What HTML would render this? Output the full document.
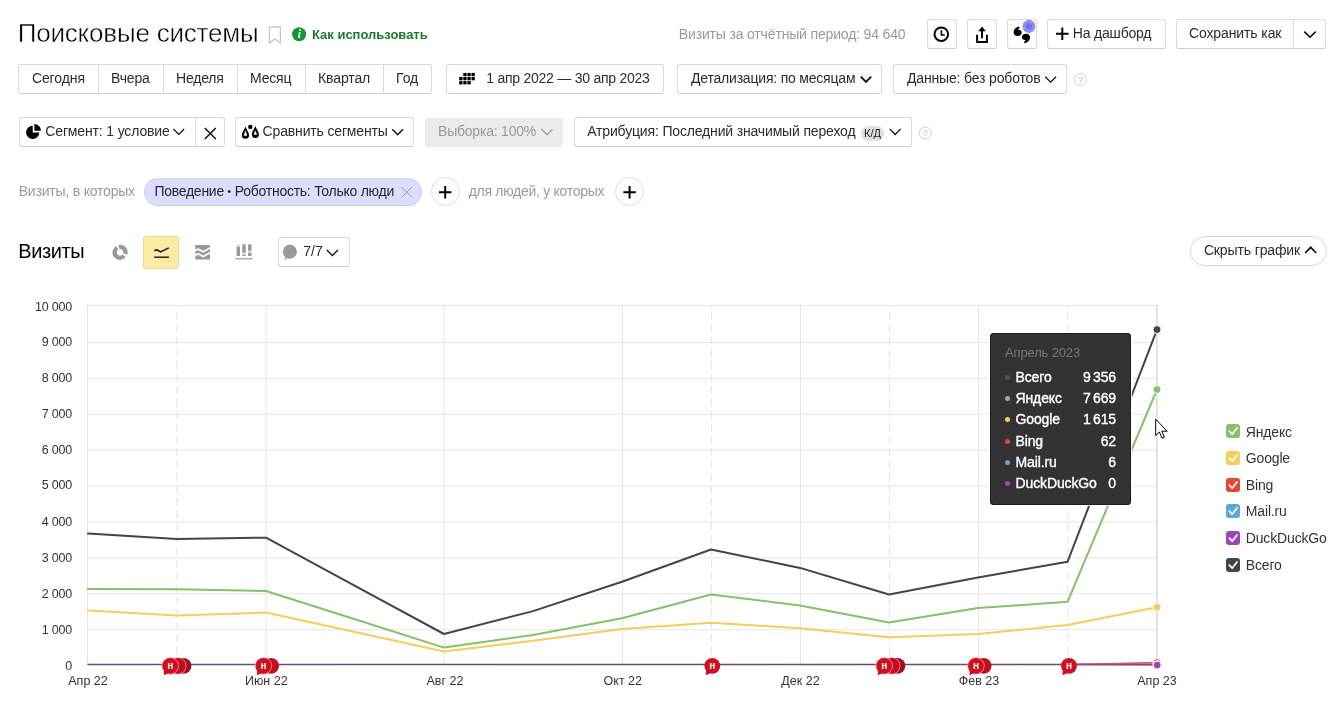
<!DOCTYPE html>
<html lang="ru">
<head>
<meta charset="utf-8">
<title>Поисковые системы</title>
<style>
*{box-sizing:border-box;margin:0;padding:0}
html,body{width:1340px;height:716px;overflow:hidden;background:#fff}
body{font-family:"Liberation Sans",sans-serif;font-size:13.5px;color:#000;position:relative;will-change:transform}
.a{position:absolute;white-space:nowrap}
.btn{position:absolute;height:30px;border:1px solid #d9d9d9;border-bottom-color:#cfcfcf;border-radius:3px;background:#fff}
.t{position:absolute;white-space:nowrap;font-size:14px;line-height:16px;color:#2b2b2b;top:5px}
.g{position:absolute;white-space:nowrap;font-size:14px;line-height:18px;color:#999;letter-spacing:-.25px}
.sep{position:absolute;top:0;bottom:0;width:1px;background:#d9d9d9}
.yl{position:absolute;white-space:nowrap;font-size:12.5px;line-height:14px;color:#333;width:60px;left:12px;text-align:right;letter-spacing:-.2px}
.xl{position:absolute;white-space:nowrap;font-size:12.5px;line-height:14px;color:#333;width:80px;text-align:center;top:674.4px}
.lg{position:absolute;white-space:nowrap;font-size:14px;line-height:16px;color:#333;left:1245.8px;letter-spacing:-.16px}
.cb{position:absolute;left:1226px;width:14px;height:14px;border-radius:3px}
.tt{position:absolute;left:989.5px;top:333.2px;width:141.6px;height:172px;background:#333;border-radius:4px;box-shadow:inset 0 0 0 1px #1e1e1e,0 0 0 1px rgba(255,255,255,.85)}
.tr{position:absolute;left:26px;right:15.1px;height:18px;font-size:14px;line-height:18px;font-weight:400;color:#fff;white-space:nowrap;letter-spacing:-.12px;-webkit-text-stroke:.35px #fff}
.tr b{position:absolute;right:0;top:0;font-weight:400;word-spacing:-1.5px}
.tr i{position:absolute;left:-11px;top:7px;width:5px;height:5px;border-radius:50%}
svg{position:absolute;overflow:visible}
</style>
</head>
<body>

<!-- ===== header row ===== -->
<div class="a" id="title" style="left:17.7px;top:17px;font-size:26px;line-height:32px;letter-spacing:-0.20px;color:#000;-webkit-text-stroke:.45px #fff">Поисковые системы</div>
<div class="a" id="howto" style="left:312.0px;top:27px;font-size:13px;line-height:16px;font-weight:700;color:#1d7a2b;letter-spacing:-0.01px">Как использовать</div>
<div class="g" id="period" style="left:678.8px;top:25px;letter-spacing:-0.16px">Визиты за отчётный период: 94 640</div>

<div class="btn" style="left:927px;top:19px;width:30px"></div>
<div class="btn" style="left:967px;top:19px;width:30px"></div>
<div class="btn" style="left:1007px;top:19px;width:30px"></div>
<div class="btn" style="left:1047px;top:19px;width:119px"><span class="t" id="dash" style="left:24.8px;letter-spacing:-0.19px">На дашборд</span></div>
<div class="btn" style="left:1176px;top:19px;width:150px"><span class="t" id="save" style="left:11.9px;letter-spacing:-0.10px">Сохранить как</span><span class="sep" style="left:116px"></span></div>

<!-- ===== period row ===== -->
<div class="btn" style="left:18px;top:64px;width:414px">
 <span class="t" id="p1" style="left:12.9px;letter-spacing:-0.09px">Сегодня</span><span class="sep" style="left:79px"></span>
 <span class="t" id="p2" style="left:92.0px;letter-spacing:-0.16px">Вчера</span><span class="sep" style="left:144px"></span>
 <span class="t" id="p3" style="left:157.0px;letter-spacing:-0.21px">Неделя</span><span class="sep" style="left:218px"></span>
 <span class="t" id="p4" style="left:231.0px;letter-spacing:-0.18px">Месяц</span><span class="sep" style="left:286px"></span>
 <span class="t" id="p5" style="left:299.0px;letter-spacing:-0.11px">Квартал</span><span class="sep" style="left:364px"></span>
 <span class="t" id="p6" style="left:377.0px;letter-spacing:0.00px">Год</span>
</div>
<div class="btn" style="left:446px;top:64px;width:218px"><span class="t" id="date" style="left:39.3px;letter-spacing:-0.25px">1 апр 2022 — 30 апр 2023</span></div>
<div class="btn" style="left:677px;top:64px;width:205px"><span class="t" id="det" style="left:13.0px;letter-spacing:-0.20px">Детализация: по месяцам</span></div>
<div class="btn" style="left:893px;top:64px;width:174px"><span class="t" id="dat" style="left:13.0px;letter-spacing:-0.16px">Данные: без роботов</span></div>

<!-- ===== segment row ===== -->
<div class="btn" style="left:19px;top:117px;width:206px"><span class="t" id="seg" style="left:25.3px;letter-spacing:-0.15px">Сегмент: 1 условие</span><span class="sep" style="left:175px"></span></div>
<div class="btn" style="left:235px;top:117px;width:179px"><span class="t" id="cmp" style="left:26.6px;letter-spacing:-0.16px">Сравнить сегменты</span></div>
<div class="btn" style="left:425px;top:118px;width:138px;height:29px;background:#ebebeb;border-color:#ebebeb"><span class="t" id="smp" style="left:12.0px;top:4px;color:#999;letter-spacing:-0.21px">Выборка: 100%</span></div>
<div class="btn" style="left:574px;top:117px;width:338px"><span class="t" id="atr" style="left:12.2px;letter-spacing:-0.16px">Атрибуция: Последний значимый переход</span>
 <span class="a" style="left:286px;top:8px;width:23px;height:15px;border-radius:8px;background:#e0e0e0"></span>
 <span class="a" id="kd" style="left:289px;top:8.5px;font-size:11px;line-height:13px;color:#222">К/Д</span></div>

<!-- ===== filter row ===== -->
<div class="g" id="f1" style="left:18.7px;top:182px;letter-spacing:-0.20px">Визиты, в которых</div>
<div class="a" style="left:144px;top:178px;width:278px;height:28px;border-radius:14px;background:#dcdcfb;border:1px solid #d2d2f4;border-bottom-color:#c9c9ee"></div>
<div class="a" id="pill" style="left:154.4px;top:182.4px;font-size:14px;line-height:18px;letter-spacing:-0.26px;color:#26263a">Поведение<span style="font-size:11px;vertical-align:1px;letter-spacing:.3px"> • </span>Роботность: Только люди</div>
<div class="a" style="left:431px;top:177px;width:29px;height:29px;border-radius:50%;border:1px solid #dcdcdc;background:#fff"></div>
<div class="g" id="f2" style="left:468.7px;top:182px;letter-spacing:-0.29px">для людей, у которых</div>
<div class="a" style="left:615px;top:177px;width:29px;height:29px;border-radius:50%;border:1px solid #dcdcdc;background:#fff"></div>

<!-- ===== chart header ===== -->
<div class="a" id="vis" style="left:18.2px;top:238.8px;font-size:20px;line-height:24px;letter-spacing:-0.38px;color:#000">Визиты</div>
<div class="a" style="left:143px;top:236px;width:36px;height:33px;border-radius:3px;background:#fdeaa4;border:1px solid #ecd894"></div>
<div class="btn" style="left:278px;top:237px;width:72px"><span class="t" id="n77" style="left:24.2px;letter-spacing:0.04px">7/7</span></div>
<div class="a" style="left:1190px;top:236px;width:137px;height:30px;border-radius:15px;border:1px solid #d8d8d8;background:#fff"><span class="t" id="hide" style="left:12.9px;letter-spacing:-0.13px">Скрыть график</span></div>

<!-- ===== y labels ===== -->
<div class="yl" id="y1" style="top:299.67px">10 000</div>
<div class="yl" id="y2" style="top:334.67px">9 000</div>
<div class="yl" id="y3" style="top:370.67px">8 000</div>
<div class="yl" id="y4" style="top:406.67px">7 000</div>
<div class="yl" id="y5" style="top:442.67px">6 000</div>
<div class="yl" id="y6" style="top:477.67px">5 000</div>
<div class="yl" id="y7" style="top:514.67px">4 000</div>
<div class="yl" id="y8" style="top:550.67px">3 000</div>
<div class="yl" id="y9" style="top:586.67px">2 000</div>
<div class="yl" id="y10" style="top:622.67px">1 000</div>
<div class="yl" id="y11" style="top:658.67px">0</div>

<!-- ===== x labels ===== -->
<div class="xl" id="x0" style="left:48px">Апр 22</div>
<div class="xl" style="left:226.3px">Июн 22</div>
<div class="xl" style="left:405px">Авг 22</div>
<div class="xl" style="left:582.8px">Окт 22</div>
<div class="xl" style="left:760.5px">Дек 22</div>
<div class="xl" id="x5" style="left:939px">Фев 23</div>
<div class="xl" style="left:1117px">Апр 23</div>

<!-- ===== chart svg ===== -->
<svg width="1340" height="716" viewBox="0 0 1340 716" style="left:0;top:0">
 <g stroke="#e5e5e5" stroke-width="1" fill="none">
  <path d="M87 305.5H1158" shape-rendering="crispEdges"/>
  <path d="M87.5 629.7H1157.5M87.5 593.8H1157.5M87.5 557.9H1157.5M87.5 522.0H1157.5M87.5 486.1H1157.5M87.5 450.2H1157.5M87.5 414.3H1157.5M87.5 378.4H1157.5M87.5 342.5H1157.5"/>
  <path d="M87.5 305V665M266 305V665M444.2 305V665M622.4 305V665M800.5 305V665M978.6 305V665"/>
  <path d="M176.8 305V665M711.4 305V665M889.5 305V665M1067.8 305V665" stroke-dasharray="8.3 4.1" stroke-dashoffset="5.65" stroke="#e4e4e4"/>
  <path d="M1156.9 305V665" stroke="#c8c8c8"/>
 </g>
 <g fill="none" stroke-width="2" stroke-linejoin="round" stroke-linecap="round">
  <path stroke="url(#bl)" stroke-width="1.4" d="M88 664.5H1157"/>
  <polyline stroke="#d9534a" stroke-width="1.6" stroke-linecap="butt" points="1060,664.3 1110,663.8 1157,662.6"/>
  <polyline stroke="#8a4a98" stroke-width="1.2" stroke-linecap="butt" points="1060,664.7 1157,664.9"/>
  <polyline stroke="#f5cd5a" points="88,610.4 176.8,615.6 266,612.6 355,632 444,651.6 533,640.8 622,629 711,622.7 800,628.2 889,637.3 978,634 1067.5,624.9 1157,607.3"/>
  <polyline stroke="#86c068" points="88,589 176.8,589.2 266,591 355,619.3 444,647.6 533,635 622,618.2 711,594.5 800,605.6 889,622.4 978,608.1 1067.5,601.8 1157,389.5"/>
  <polyline stroke="#444" points="88,533.4 176.8,539 266,537.7 355,585.9 444,634 533,611.1 622,581.7 711,549.5 800,567.9 889,594.5 978,577.4 1067.5,561.8 1157,329.6"/>
 </g>
 <g stroke="#fff" stroke-width="1">
  <circle cx="1157" cy="329.6" r="4" fill="#444"/>
  <circle cx="1157" cy="389.5" r="4" fill="#86c068"/>
  <circle cx="1157" cy="607.3" r="4" fill="#f5cd5a"/>
  <circle cx="1157" cy="662.6" r="4" fill="#e4492b"/>
  <circle cx="1157" cy="664.6" r="4" fill="#5aa7dc"/>
  <circle cx="1157.2" cy="665" r="4" fill="#a044b5"/>
 </g>
</svg>

<!-- ===== legend ===== -->
<div class="cb" style="top:424px;background:#86c068"></div><div class="lg" id="l1" style="top:423.5px">Яндекс</div>
<div class="cb" style="top:451px;background:#f5cd5a"></div><div class="lg" id="l2" style="top:450.4px">Google</div>
<div class="cb" style="top:478px;background:#e4492b"></div><div class="lg" id="l3" style="top:477.4px">Bing</div>
<div class="cb" style="top:504px;background:#5aa7dc"></div><div class="lg" id="l4" style="top:503.4px">Mail.ru</div>
<div class="cb" style="top:531px;background:#a044b5"></div><div class="lg" id="l5" style="top:530.4px;left:1245.8px;letter-spacing:-0.16px">DuckDuckGo</div>
<div class="cb" style="top:558px;background:#444"></div><div class="lg" id="l6" style="top:556.8px">Всего</div>

<!-- ===== tooltip ===== -->
<div class="tt">
 <div class="a" id="tth" style="left:15.6px;top:11.8px;font-size:13px;line-height:16px;color:#777;letter-spacing:-0.16px">Апрель 2023</div>
 <div class="tr" style="top:34.95px"><i style="background:#555"></i>Всего<b>9 356</b></div>
 <div class="tr" style="top:55.95px"><i style="background:#86c068"></i>Яндекс<b>7 669</b></div>
 <div class="tr" style="top:76.95px"><i style="background:#f5cd5a"></i>Google<b>1 615</b></div>
 <div class="tr" style="top:98.95px"><i style="background:#e4492b"></i>Bing<b>62</b></div>
 <div class="tr" style="top:119.95px"><i style="background:#5aa7dc"></i>Mail.ru<b>6</b></div>
 <div class="tr" id="ttd" style="top:140.95px"><i style="background:#a044b5"></i>DuckDuckGo<b>0</b></div>
</div>

<!-- ===== icons (page coordinates) ===== -->
<svg id="icons" width="1340" height="716" viewBox="0 0 1340 716" style="left:0;top:0">
 <defs>
  <linearGradient id="bl" gradientUnits="userSpaceOnUse" x1="88" y1="0" x2="1157" y2="0"><stop offset="0" stop-color="#5a5488"/><stop offset=".6" stop-color="#5e5078"/><stop offset="1" stop-color="#7a4862"/></linearGradient>
  <radialGradient id="bd" cx="50%" cy="50%" r="50%">
   <stop offset="0" stop-color="#6a6ae6"/><stop offset=".38" stop-color="#7575ec"/><stop offset=".55" stop-color="#8c8cf4"/><stop offset=".9" stop-color="#9393f6"/><stop offset="1" stop-color="#9393f6" stop-opacity="0"/>
  </radialGradient>
 </defs>
 <!-- bookmark -->
 <path d="M269.4 27H280.4V43L274.9 38.9L269.4 43Z" fill="none" stroke="#c6c6c6" stroke-width="1.3" stroke-linejoin="miter"/>
 <!-- info -->
 <circle cx="299.1" cy="34.2" r="7" fill="#17933c"/>
 <text x="299.3" y="38.3" text-anchor="middle" font-family="'Liberation Serif',serif" font-size="12" font-weight="700" font-style="italic" fill="#e9ffe9">i</text>
 <!-- clock -->
 <circle cx="941.3" cy="34.2" r="6.8" fill="none" stroke="#000" stroke-width="2"/>
 <path d="M941.4 30.3V35H944.8" fill="none" stroke="#000" stroke-width="1.6"/>
 <!-- share -->
 <path d="M977.1 34.8V42H986.9V34.8" fill="none" stroke="#000" stroke-width="2"/>
 <path d="M982 38.2V29.5" fill="none" stroke="#000" stroke-width="2"/>
 <path d="M982 26.4L985.8 31.2H978.2Z" fill="#000"/>
 <!-- quotes -->
 <path d="M1018.9 26.6C1016.3 27.2 1013.6 29.2 1013.6 32.3C1013.6 34.6 1015.0 36.0 1017.5 36.0C1020.1 36.0 1021.7 34.6 1021.7 32.6C1021.7 30.8 1020.3 29.7 1018.3 29.8C1018.4 28.9 1018.9 28.2 1019.8 27.9Z" fill="#000"/>
 <path d="M1024.7 43.2C1027.3 42.6 1030.0 40.6 1030.0 37.5C1030.0 35.2 1028.6 33.8 1026.1 33.8C1023.5 33.8 1021.9 35.2 1021.9 37.2C1021.9 39.0 1023.3 40.1 1025.3 40.0C1025.2 40.9 1024.7 41.6 1023.8 41.9Z" fill="#000"/>
 <circle cx="1028.9" cy="26.4" r="6.8" fill="url(#bd)"/>
 <!-- plus (dashboard) -->
 <path d="M1056 33.7H1068.6M1062.3 27.4V40" fill="none" stroke="#000" stroke-width="2"/>
 <!-- save chevron -->
 <path d="M1304.3 31.6L1310 37.2L1315.7 31.6" fill="none" stroke="#000" stroke-width="1.5"/>
 <!-- calendar dots -->
 <g fill="#000">
  <rect x="463.3" y="72.9" width="3.3" height="3.3"/><rect x="467.4" y="72.9" width="3.3" height="3.3"/><rect x="471.5" y="72.9" width="3.3" height="3.3"/><rect x="459.2" y="77.0" width="3.3" height="3.3"/><rect x="463.3" y="77.0" width="3.3" height="3.3"/><rect x="467.4" y="77.0" width="3.3" height="3.3"/><rect x="471.5" y="77.0" width="3.3" height="3.3"/><rect x="459.2" y="81.1" width="3.3" height="3.3"/><rect x="463.3" y="81.1" width="3.3" height="3.3"/><rect x="467.4" y="81.1" width="3.3" height="3.3"/>
 </g>
 <!-- chevrons -->
 <g fill="none" stroke="#111">
  <path d="M860.8 76.6L866 81.8L871.2 76.6" stroke-width="1.9"/>
  <path d="M1045.2 76.8L1050.6 82.1L1056 76.8" stroke-width="1.3"/>
  <path d="M173.5 129L178.8 134.4L184.1 129" stroke-width="1.3"/>
  <path d="M392.3 129.2L397.7 134.7L403 129.2" stroke-width="1.5"/>
  <path d="M541.5 129.2L547 134.6L552.5 129.2" stroke="#999" stroke-width="1.3"/>
  <path d="M889.7 128.9L895.2 134.5L900.7 128.9" stroke-width="1.3"/>
  <path d="M326.8 250L332.4 255.5L338 250" stroke-width="1.3"/>
  <path d="M1305.2 253L1310.7 247.3L1316.2 253" stroke-width="1.7"/>
 </g>
 <!-- segment pie -->
 <path d="M32.7 132.4V125.8A6.6 6.6 0 1 0 39.3 132.4Z" fill="#000"/>
 <path d="M34.4 130.7V124.1A6.6 6.6 0 0 1 41 130.7Z" fill="#000"/>
 <!-- segment X -->
 <path d="M204.8 128L215.8 139M215.8 128L204.8 139" fill="none" stroke="#000" stroke-width="1.3"/>
 <!-- drops -->
 <path d="M245.45 126.5C246.4 129.6 249.05 132.3 249.05 135.25A3.6 3.6 0 0 1 241.85 135.25C241.85 132.3 244.5 129.6 245.45 126.5Z" fill="#000"/>
 <path d="M245.45 130.9L246.95 135.4H243.95Z" fill="#fff" stroke="#fff" stroke-width=".5" stroke-linejoin="round"/>
 <path d="M255.35 126.1C256.3 129 258.85 131.6 258.85 134.4A3.5 3.5 0 0 1 251.85 134.4C251.85 131.6 254.4 129 255.35 126.1Z" fill="#000"/>
 <path d="M255.35 130.9L256.7 134.5H254Z" fill="#fff" stroke="#fff" stroke-width=".5" stroke-linejoin="round"/>
 <circle cx="250.3" cy="126.9" r="2.2" fill="#000"/>
 <!-- help icons -->
 <g fill="none" stroke="#d0d0d0" stroke-width="1">
  <circle cx="1080.5" cy="79.5" r="6"/>
  <circle cx="925.3" cy="133" r="6"/>
 </g>
 <text x="1080.5" y="82.8" text-anchor="middle" font-family="'Liberation Sans',sans-serif" font-size="9" fill="#c4c4c4">?</text>
 <text x="925.3" y="136.3" text-anchor="middle" font-family="'Liberation Sans',sans-serif" font-size="9" fill="#c4c4c4">?</text>
 <!-- pill X -->
 <path d="M401.5 187L412 197.5M412 187L401.5 197.5" fill="none" stroke="#9c9cb8" stroke-width="1"/>
 <!-- plus circles -->
 <path d="M439 192.3H451.4M445.2 186.1V198.5" fill="none" stroke="#000" stroke-width="2"/>
 <path d="M623.4 192.3H635.8M629.6 186.1V198.5" fill="none" stroke="#000" stroke-width="2"/>
 <!-- chart type: donut -->
 <g transform="translate(0 .4)"><g fill="none" stroke="#999" stroke-width="4.2">
  <path d="M118.92 246.66A5.3 5.3 0 0 1 125.18 253.61"/>
  <path d="M124.08 255.36A5.3 5.3 0 1 1 117.25 247.51"/>
 </g></g>
 <!-- chart type: line (active) -->
 <path d="M154.3 250.8L156.6 249.7L160.6 251.9L168.8 247.9" fill="none" stroke="#201000" stroke-width="1.6" stroke-linejoin="round"/>
 <path d="M154.2 257.2H169" fill="none" stroke="#201000" stroke-width="1.4"/>
 <!-- chart type: area -->
 <g fill="#999">
  <path d="M195.2 245H210V247L203.3 250.8L198.5 248.3L195.2 249.3Z"/>
  <path d="M195.2 251.2L198.5 250.2L203.3 252.7L210 248.9V251.8L203.3 255.6L198.5 253.1L195.2 254.1Z"/>
  <path d="M195.2 256L198.5 255L203.3 257.5L210 253.7V259.6H195.2Z"/>
 </g>
 <!-- chart type: bars -->
 <g fill="#d2d2d2">
  <rect x="236.7" y="244.6" width="3.3" height="11.4"/>
  <rect x="242.4" y="244.4" width="3.3" height="11.6"/>
  <rect x="248.1" y="244.4" width="3.3" height="11.6"/>
 </g>
 <g fill="#999">
  <rect x="236.7" y="247" width="3.3" height="9"/>
  <rect x="242.4" y="244.4" width="3.3" height="8"/><rect x="242.4" y="255" width="3.3" height="1"/>
  <rect x="248.1" y="244.4" width="3.3" height="6.2"/><rect x="248.1" y="253" width="3.3" height="3"/>
  <rect x="235.4" y="258.2" width="17.2" height="1.2"/>
 </g>
 <!-- comments bubble -->
 <path d="M289.7 244.8A6.9 6.9 0 1 1 287.2 258C286.4 259.2 285.4 259.8 284.2 260C285 259 285.3 258 285.2 256.8A6.9 6.9 0 0 1 289.7 244.8Z" fill="#999"/>
 <!-- note markers -->
 <circle cx="183.5" cy="665.8" r="7.9" fill="#a50c1c"/>
 <circle cx="177.9" cy="665.8" r="8.6" fill="#ff9ea3"/>
 <circle cx="177.9" cy="665.8" r="7.9" fill="#c20e1e"/>
 <circle cx="170.3" cy="665.8" r="8.6" fill="#ff9ea3"/>
 <path d="M164.0 670.3L163.8 675.3L168.3 673.3Z" fill="#d20f1f"/>
 <circle cx="170.3" cy="665.8" r="7.9" fill="#d20f1f"/>
 <text x="170.3" y="669.2" text-anchor="middle" font-family="'Liberation Sans',sans-serif" font-size="10" font-weight="700" fill="#fff">н</text>
 <circle cx="271.1" cy="665.8" r="7.9" fill="#c20e1e"/>
 <circle cx="263.5" cy="665.8" r="8.6" fill="#ff9ea3"/>
 <path d="M257.2 670.3L257.0 675.3L261.5 673.3Z" fill="#d20f1f"/>
 <circle cx="263.5" cy="665.8" r="7.9" fill="#d20f1f"/>
 <text x="263.5" y="669.2" text-anchor="middle" font-family="'Liberation Sans',sans-serif" font-size="10" font-weight="700" fill="#fff">н</text>
 <path d="M706.0 670.3L705.8 675.3L710.3 673.3Z" fill="#d20f1f"/>
 <circle cx="712.3" cy="665.8" r="7.9" fill="#d20f1f"/>
 <text x="712.3" y="669.2" text-anchor="middle" font-family="'Liberation Sans',sans-serif" font-size="10" font-weight="700" fill="#fff">н</text>
 <circle cx="897.4" cy="665.8" r="7.9" fill="#a50c1c"/>
 <circle cx="891.8" cy="665.8" r="8.6" fill="#ff9ea3"/>
 <circle cx="891.8" cy="665.8" r="7.9" fill="#c20e1e"/>
 <circle cx="884.2" cy="665.8" r="8.6" fill="#ff9ea3"/>
 <path d="M877.9 670.3L877.7 675.3L882.2 673.3Z" fill="#d20f1f"/>
 <circle cx="884.2" cy="665.8" r="7.9" fill="#d20f1f"/>
 <text x="884.2" y="669.2" text-anchor="middle" font-family="'Liberation Sans',sans-serif" font-size="10" font-weight="700" fill="#fff">н</text>
 <circle cx="983.6" cy="665.8" r="7.9" fill="#c20e1e"/>
 <circle cx="976.0" cy="665.8" r="8.6" fill="#ff9ea3"/>
 <path d="M969.7 670.3L969.5 675.3L974.0 673.3Z" fill="#d20f1f"/>
 <circle cx="976.0" cy="665.8" r="7.9" fill="#d20f1f"/>
 <text x="976.0" y="669.2" text-anchor="middle" font-family="'Liberation Sans',sans-serif" font-size="10" font-weight="700" fill="#fff">н</text>
 <path d="M1062.7 670.3L1062.5 675.3L1067.0 673.3Z" fill="#d20f1f"/>
 <circle cx="1069.0" cy="665.8" r="7.9" fill="#d20f1f"/>
 <text x="1069.0" y="669.2" text-anchor="middle" font-family="'Liberation Sans',sans-serif" font-size="10" font-weight="700" fill="#fff">н</text>
 <!-- cursor -->
 <path d="M1155.7 419.2V435.6L1159.4 432L1162 438.2L1164.4 437.2L1161.8 431.2H1167.2Z" fill="#fff" stroke="#000" stroke-width="1" stroke-linejoin="miter"/>
 <!-- legend checks -->
 <path d="M1229.3 431.2L1232.2 434.2L1237 428.0" fill="none" stroke="#fff" stroke-width="1.7" stroke-linecap="round" stroke-linejoin="round"/>
 <path d="M1229.3 458.2L1232.2 461.2L1237 455.0" fill="none" stroke="#fff" stroke-width="1.7" stroke-linecap="round" stroke-linejoin="round"/>
 <path d="M1229.3 485.2L1232.2 488.2L1237 482.0" fill="none" stroke="#fff" stroke-width="1.7" stroke-linecap="round" stroke-linejoin="round"/>
 <path d="M1229.3 511.2L1232.2 514.2L1237 508.0" fill="none" stroke="#fff" stroke-width="1.7" stroke-linecap="round" stroke-linejoin="round"/>
 <path d="M1229.3 538.2L1232.2 541.2L1237 535.0" fill="none" stroke="#fff" stroke-width="1.7" stroke-linecap="round" stroke-linejoin="round"/>
 <path d="M1229.3 565.2L1232.2 568.2L1237 562.0" fill="none" stroke="#fff" stroke-width="1.7" stroke-linecap="round" stroke-linejoin="round"/>
</svg>

</body>
</html>
